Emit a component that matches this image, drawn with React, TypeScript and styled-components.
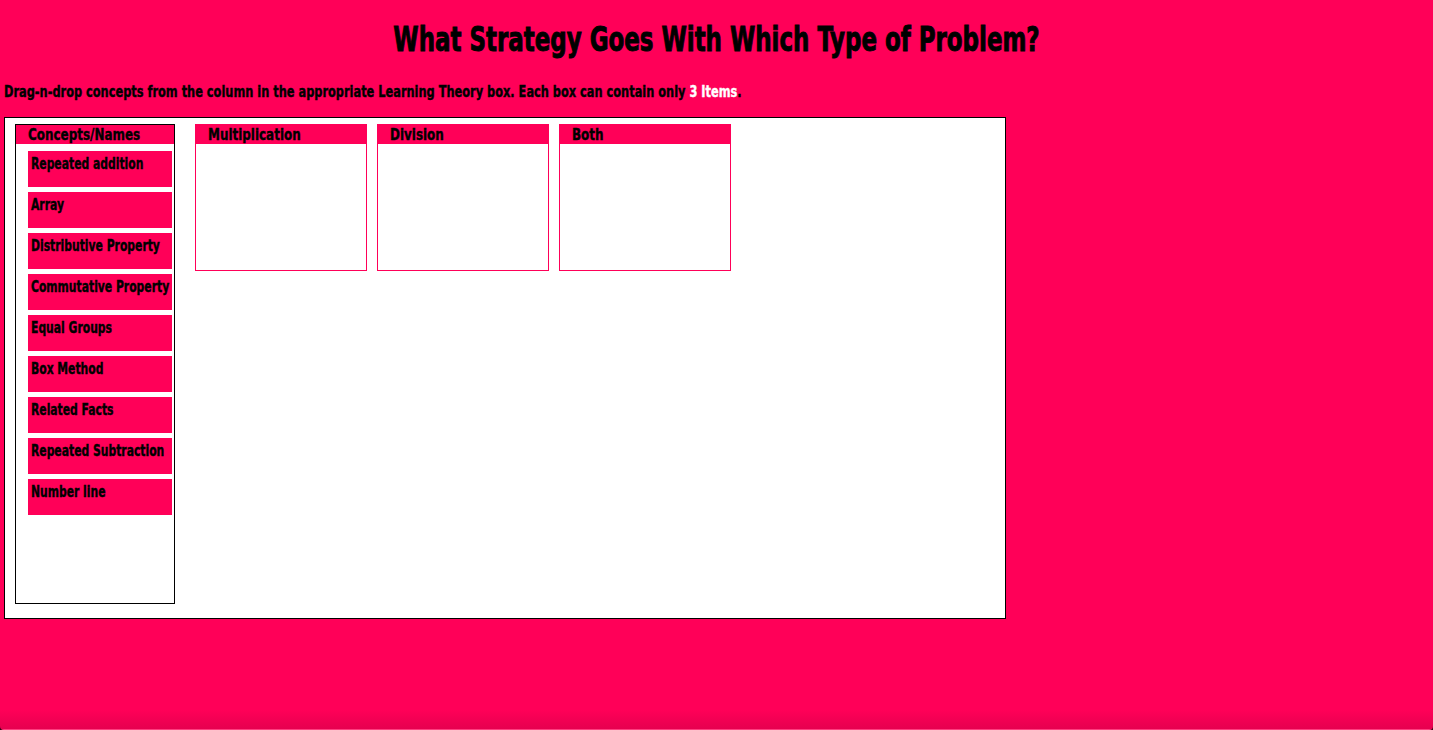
import React from "react";
import styled, { createGlobalStyle } from "styled-components";

const GlobalStyle = createGlobalStyle`
  html, body {
    margin: 0;
    padding: 0;
    background-color: #3a0014;
  }
  body {
    font-family: Impact, "DejaVu Sans Condensed", "DejaVu Sans", sans-serif;
    font-weight: bold;
    color: #000;
  }
`;

const Page = styled.div`
  box-sizing: border-box;
  height: 730px;
  overflow: hidden;
  padding: 22px 4px 0;
  border-radius: 0 0 4px 4px;
  background: linear-gradient(
    to bottom,
    #ff0058 calc(100% - 20px),
    #e6004f calc(100% - 1px),
    #ff3d7f calc(100% - 1px)
  );
`;

const Title = styled.h1`
  margin: 0;
  height: 36px;
  font-size: 33px;
  line-height: 36px;
  font-weight: bold;
  text-align: center;
  white-space: nowrap;
  transform: scaleX(0.773);
  -webkit-text-stroke: 0.9px #000;
`;

const Instructions = styled.p`
  margin: 25px 0 0;
  height: 18px;
  font-size: 16px;
  line-height: 18px;
  white-space: nowrap;
  transform-origin: left center;
  transform: scaleX(0.79);
  -webkit-text-stroke: 0.4px #000;
`;

const Highlight = styled.span`
  color: #fff;
  -webkit-text-stroke: 0.4px #fff;
`;

const Board = styled.div`
  box-sizing: border-box;
  display: flex;
  align-items: flex-start;
  width: 1002px;
  height: 502px;
  margin-top: 16px;
  padding: 6px 10px;
  background-color: #fff;
  border: 1px solid #000;
`;

const Column = styled.div`
  box-sizing: border-box;
  width: 160px;
  height: 480px;
  border: 1px solid #000;
`;

const Heading = styled.div`
  height: 19px;
  padding-left: 12px;
  background-color: #ff0058;
  font-size: 16px;
  line-height: 20px;
  white-space: nowrap;
`;

const Label = styled.span<{ $scale: number }>`
  display: inline-block;
  transform-origin: left center;
  transform: scaleX(${(props) => props.$scale});
  -webkit-text-stroke: 0.4px #000;
`;

const ItemList = styled.div`
  display: flex;
  flex-direction: column;
  gap: 5px;
  margin: 7px 2px 0 12px;
`;

const Item = styled.div`
  box-sizing: border-box;
  height: 36px;
  padding: 4px 0 0 3px;
  background-color: #ff0058;
  font-size: 15px;
  line-height: 18px;
  white-space: nowrap;
`;

const Boxes = styled.div`
  display: flex;
  gap: 10px;
  margin-left: 20px;
`;

const DropBox = styled.div`
  box-sizing: border-box;
  width: 172px;
  height: 147px;
  border: 1px solid #ff0058;
`;

const concepts = [
  "Repeated addition",
  "Array",
  "Distributive Property",
  "Commutative Property",
  "Equal Groups",
  "Box Method",
  "Related Facts",
  "Repeated Subtraction",
  "Number line",
];

const categories = ["Multiplication", "Division", "Both"];

const App = (): JSX.Element => {
  return (
    <>
      <GlobalStyle />
      <Page>
        <Title>What Strategy Goes With Which Type of Problem?</Title>
        <Instructions>
          Drag-n-drop concepts from the column in the appropriate Learning Theory box. Each box can
          contain only <Highlight>3 Items</Highlight>.
        </Instructions>
        <Board>
          <Column>
            <Heading>
              <Label $scale={0.83}>Concepts/Names</Label>
            </Heading>
            <ItemList>
              {concepts.map((concept) => (
                <Item key={concept}>
                  <Label $scale={0.8}>{concept}</Label>
                </Item>
              ))}
            </ItemList>
          </Column>
          <Boxes>
            {categories.map((category) => (
              <DropBox key={category}>
                <Heading>
                  <Label $scale={0.83}>{category}</Label>
                </Heading>
              </DropBox>
            ))}
          </Boxes>
        </Board>
      </Page>
    </>
  );
};

export default App;
